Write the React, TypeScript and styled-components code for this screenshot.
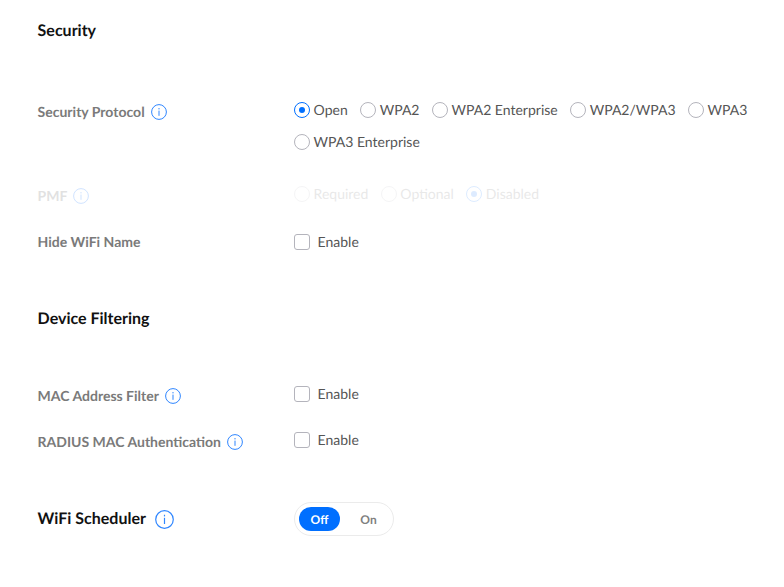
import React from "react";
import styled, { createGlobalStyle } from "styled-components";

const Global = createGlobalStyle`
  html, body { margin: 0; padding: 0; background: #fff; }
  body { font-family: Lato, "Open Sans", sans-serif; text-rendering: geometricPrecision; }
`;
const Page = styled.div`
  width: 784px; height: 587px; padding: 21px 0 0 37.6px; box-sizing: border-box; overflow: hidden;
`;
const Heading = styled.h2<{ $mb: number }>`
  margin: 0 0 ${p => p.$mb}px; font-size: 16px; line-height: 20px; font-weight: 700; color: #111;
`;
const Row = styled.div<{ $h: number }>`
  display: flex; min-height: ${p => p.$h}px; align-items: flex-start;
`;
const Label = styled.div<{ $drop?: boolean; $dim?: boolean }>`
  width: 256.4px; flex: none; display: flex; align-items: center; gap: 6px;
  font-size: 14px; line-height: 20px; font-weight: 700; color: #7a7a7a;
  padding-top: ${p => (p.$drop ? 2 : 0)}px;
  opacity: ${p => (p.$dim ? 0.22 : 1)};
`;
const Options = styled.div<{ $dim?: boolean }>`
  display: flex; flex-wrap: wrap; width: 470px; row-gap: 12px; column-gap: 12.4px;
  opacity: ${p => (p.$dim ? 0.13 : 1)};
`;
const Opt = styled.label`
  display: flex; align-items: center; gap: 3.6px; font-size: 14px; line-height: 20px; color: #555;
`;
const Radio = styled.span<{ $on?: boolean }>`
  width: 16px; height: 16px; border-radius: 50%; box-sizing: border-box; flex: none;
  border: 1px solid ${p => (p.$on ? "#006fff" : "#b4b4bc")};
  display: flex; align-items: center; justify-content: center;
  &::after { content: ""; width: 6px; height: 6px; border-radius: 50%; background: ${p => (p.$on ? "#006fff" : "transparent")}; }
`;
const Check = styled.span`
  width: 16px; height: 16px; border-radius: 3px; box-sizing: border-box; border: 1px solid #b4b4bc; flex: none;
`;
const CheckOpt = styled(Opt)` gap: 7.6px; `;
const Toggle = styled.div`
  width: 100px; height: 34px; margin-top: -6px; box-sizing: border-box; border: 1px solid #ebebeb; border-radius: 17px;
  display: flex; align-items: center; padding: 0 4px; gap: 8px;
`;
const Seg = styled.span<{ $on?: boolean }>`
  width: 41px; height: 24px; flex: none; border-radius: 12px; display: flex; align-items: center; justify-content: center;
  font-size: 12px; font-weight: 700; color: ${p => (p.$on ? "#fff" : "#808080")}; background: ${p => (p.$on ? "#006fff" : "transparent")};
`;
const BigLabel = styled(Label)` font-size: 16px; color: #111; gap: 9px; padding-top: 1px; `;

const Info = ({ size = 16 }: { size?: number }) => (
  <svg width={size} height={size} viewBox="0 0 16 16" fill="none">
    <circle cx="8" cy="8" r="7.4" stroke="#2f86ff" strokeWidth="1" />
    <rect x="7.5" y="4" width="1" height="1.4" fill="#2f86ff" />
    <rect x="7.5" y="6.6" width="1" height="5.2" fill="#2f86ff" />
  </svg>
);
const Enable = () => <CheckOpt><Check />Enable</CheckOpt>;

export default function App() {
  return (
    <Page>
      <Global />
      <Heading $mb={59}>Security</Heading>
      <Row $h={84}>
        <Label $drop>Security Protocol <Info /></Label>
        <Options>
          <Opt><Radio $on />Open</Opt>
          <Opt><Radio />WPA2</Opt>
          <Opt><Radio />WPA2 Enterprise</Opt>
          <Opt><Radio />WPA2/WPA3</Opt>
          <Opt><Radio />WPA3</Opt>
          <Opt><Radio />WPA3 Enterprise</Opt>
        </Options>
      </Row>
      <Row $h={48}>
        <Label $drop $dim>PMF <Info /></Label>
        <Options $dim>
          <Opt><Radio />Required</Opt>
          <Opt><Radio />Optional</Opt>
          <Opt><Radio $on />Disabled</Opt>
        </Options>
      </Row>
      <Row $h={77}>
        <Label>Hide WiFi Name</Label>
        <Enable />
      </Row>
      <Heading $mb={55}>Device Filtering</Heading>
      <Row $h={46}>
        <Label $drop>MAC Address Filter <Info /></Label>
        <Enable />
      </Row>
      <Row $h={78}>
        <Label $drop>RADIUS MAC Authentication <Info /></Label>
        <Enable />
      </Row>
      <Row $h={40}>
        <BigLabel>WiFi Scheduler <Info size={19} /></BigLabel>
        <Toggle><Seg $on>Off</Seg><Seg>On</Seg></Toggle>
      </Row>
    </Page>
  );
}
